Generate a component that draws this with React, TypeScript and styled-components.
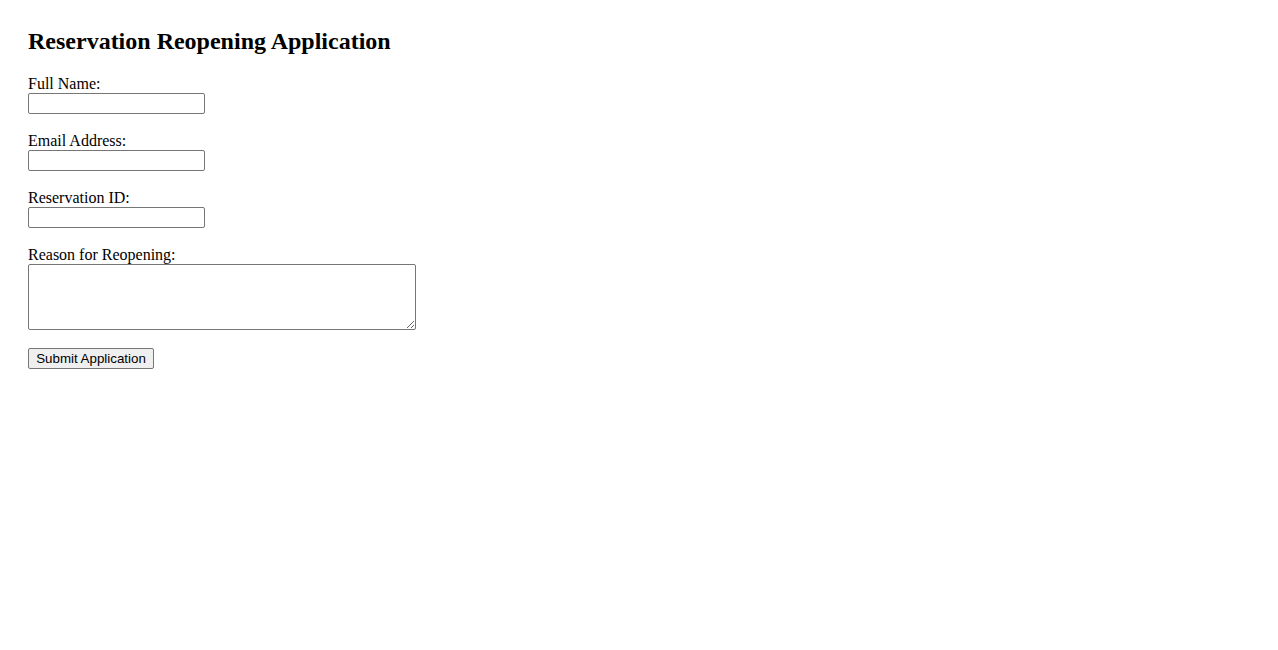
import React from "react";
import styled, { createGlobalStyle } from "styled-components";

const GlobalStyle = createGlobalStyle`
  html, body {
    margin: 0;
    padding: 0;
    background: #ffffff;
  }
  body {
    font-family: "Liberation Serif", "Times New Roman", serif;
    font-size: 16px;
    color: #000000;
  }
`;

const Page = styled.div`
  padding: 28px;
`;

const Title = styled.h2`
  margin: 0 0 20px 0;
  font-family: "Liberation Serif", "Times New Roman", serif;
  font-size: 24px;
  font-weight: bold;
  line-height: 26.5px;
`;

const Form = styled.form`
  display: flex;
  flex-direction: column;
  align-items: flex-start;
`;

const Field = styled.div`
  display: flex;
  flex-direction: column;
  align-items: flex-start;
  margin-bottom: 18px;
`;

const Label = styled.label`
  display: block;
  font-size: 16px;
  line-height: 18px;
  height: 18px;
`;

const TextInput = styled.input`
  box-sizing: border-box;
  width: 177px;
  height: 21px;
  margin: 0;
  padding: 1px 2px;
  border: 1px solid #767676;
  border-radius: 2px;
  background: #ffffff;
  font-family: "Liberation Sans", Arial, sans-serif;
  font-size: 13.33px;
`;

const TextArea = styled.textarea`
  box-sizing: border-box;
  width: 388px;
  height: 66px;
  margin: 0;
  padding: 2px;
  border: 1px solid #767676;
  border-radius: 2px;
  background: #ffffff;
  font-family: "Liberation Mono", monospace;
  font-size: 13.33px;
  display: block;
`;

const SubmitButton = styled.button`
  box-sizing: border-box;
  width: 126px;
  height: 21px;
  margin: 0;
  padding: 1px 6px;
  border: 1px solid #767676;
  border-radius: 2px;
  background: #efefef;
  color: #000000;
  font-family: "Liberation Sans", Arial, sans-serif;
  font-size: 13.33px;
  line-height: 15px;
  cursor: default;
`;

export default function App() {
  return (
    <>
      <GlobalStyle />
      <Page>
        <Title>Reservation Reopening Application</Title>
        <Form onSubmit={(e) => e.preventDefault()}>
          <Field>
            <Label htmlFor="fullName">Full Name:</Label>
            <TextInput id="fullName" type="text" />
          </Field>
          <Field>
            <Label htmlFor="email">Email Address:</Label>
            <TextInput id="email" type="email" />
          </Field>
          <Field>
            <Label htmlFor="resId">Reservation ID:</Label>
            <TextInput id="resId" type="text" />
          </Field>
          <Field>
            <Label htmlFor="reason">Reason for Reopening:</Label>
            <TextArea id="reason" />
          </Field>
          <SubmitButton type="submit">Submit Application</SubmitButton>
        </Form>
      </Page>
    </>
  );
}
